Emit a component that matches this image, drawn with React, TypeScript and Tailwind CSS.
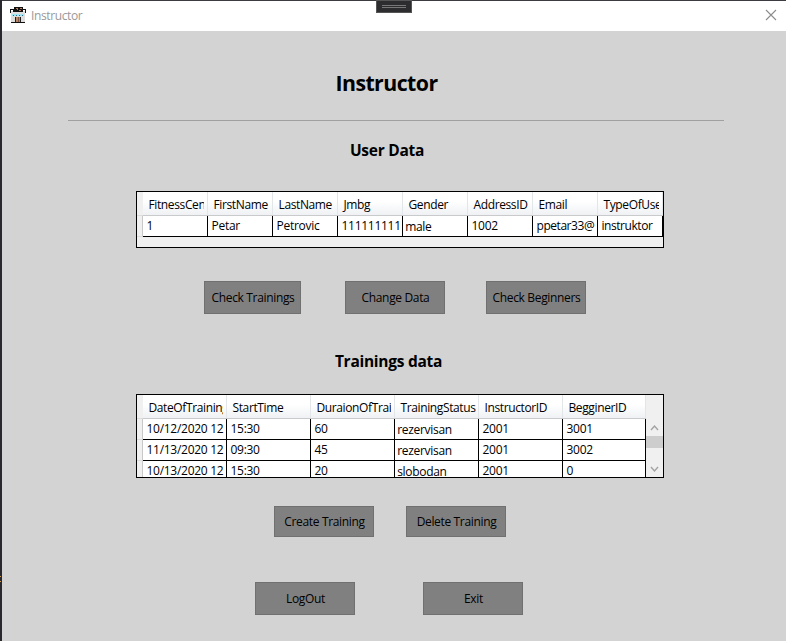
import React from "react";

type Col = { title: string; width: string; clip: string };

const userCols: Col[] = [
  { title: "FitnessCenter", width: "w-[65px]", clip: "w-[59px]" },
  { title: "FirstName", width: "w-[65px]", clip: "w-[62px]" },
  { title: "LastName", width: "w-[65px]", clip: "w-[62px]" },
  { title: "Jmbg", width: "w-[65px]", clip: "w-[59px]" },
  { title: "Gender", width: "w-[65px]", clip: "w-[59px]" },
  { title: "AddressID", width: "w-[65px]", clip: "w-[62px]" },
  { title: "Email", width: "w-[65px]", clip: "w-[59px]" },
  { title: "TypeOfUser", width: "w-[65px]", clip: "w-[59px]" },
];
const userRows = [["1", "Petar", "Petrovic", "111111111", "male", "1002", "ppetar33@", "instruktor"]];

const trainingCols: Col[] = [
  { title: "DateOfTraining", width: "w-[84px]", clip: "w-[78px]" },
  { title: "StartTime", width: "w-[84px]", clip: "w-[78px]" },
  { title: "DuraionOfTraining", width: "w-[84px]", clip: "w-[78px]" },
  { title: "TrainingStatus", width: "w-[84px]", clip: "w-[81px]" },
  { title: "InstructorID", width: "w-[84px]", clip: "w-[78px]" },
  { title: "BegginerID", width: "w-[83px]", clip: "w-[78px]" },
];
const trainingRows = [
  ["10/12/2020 12", "15:30", "60", "rezervisan", "2001", "3001"],
  ["11/13/2020 12", "09:30", "45", "rezervisan", "2001", "3002"],
  ["10/13/2020 12", "15:30", "20", "slobodan", "2001", "0"],
];

const comboValues = ["male", "rezervisan", "slobodan"];

function cellText(value: string) {
  if (comboValues.includes(value)) return "pl-[2.2px] leading-[21px] tracking-[-0.3px]";
  if (/^[a-z]/.test(value)) return "pl-[3.5px] leading-[19px] tracking-[-0.45px]";
  return "pl-[3.5px] leading-[19px] tracking-[-0.28px]";
}

function Grid({ cols, rows }: { cols: Col[]; rows: string[][] }) {
  return (
    <div className="flex">
      <div className="w-[6px] shrink-0">
        <div className="h-[24px] border-b border-[#dcdcdc]" />
        {rows.map((_, i) => (
          <div key={i} className="h-[21px] border-r border-b border-r-[#c8c8c8] border-b-[#dcdcdc]" />
        ))}
      </div>
      <div className="shrink-0">
        <div className="flex h-[24px] border-b border-[#c9cacb] bg-gradient-to-b from-white from-40% to-[#eff1f4]">
          {cols.map((c) => (
            <div key={c.title} className={`${c.width} shrink-0 border-r border-[#e3e6e9] pl-[2px]`}>
              <div className={`${c.clip} h-[23px] overflow-hidden whitespace-nowrap pl-[3.5px] leading-[25px] tracking-[-0.38px]`}>
                {c.title}
              </div>
            </div>
          ))}
        </div>
        {rows.map((r, i) => (
          <div key={i} className="flex h-[21px] border-b border-black bg-white">
            {r.map((v, j) => (
              <div
                key={j}
                className={`${cols[j].width} ${cellText(v)} shrink-0 overflow-hidden whitespace-nowrap border-r border-black`}
              >
                {v}
              </div>
            ))}
          </div>
        ))}
      </div>
    </div>
  );
}

function Button({ label, size }: { label: string; size: string }) {
  return (
    <button
      className={`${size} flex items-center justify-center border border-[#707070] bg-[#808080] pl-px pt-px tracking-[-0.34px]`}
    >
      {label}
    </button>
  );
}

function GymIcon() {
  return (
    <svg width="16" height="16" viewBox="0 0 16 16" shapeRendering="crispEdges">
      <path d="M1 4h14v11h-14z" fill="#dedede" />
      <path d="M0 2h16v1h-16zM0 3h1v3h-1zM15 3h1v3h-1z" fill="#111" />
      <path d="M4 0h9v4h-9zM3 3h10v2h-10z" fill="#111" />
      <path d="M6 1h2v1h-2zM10 1h2v1h-2zM7 2h1v1h-1zM9 3h2v1h-2z" fill="#b77b5b" />
      <path d="M2 7h12v2h-12z" fill="#a5e5f3" />
      <path d="M3 8h1v1h-1zM6 8h1v1h-1zM9 8h1v1h-1zM12 8h1v1h-1z" fill="#24728c" />
      <path d="M5 10h1v5h-1zM10 10h1v5h-1z" fill="#222" />
      <path d="M6 10h4v5h-4z" fill="#b98569" />
      <path d="M8 10h1v5h-1z" fill="#7d5644" />
      <path d="M1 15h14v1h-14z" fill="#111" />
    </svg>
  );
}

export default function App() {
  return (
    <div className="flex h-[641px] w-[786px] overflow-hidden bg-[#d3d3d3] font-['Open_Sans','Noto_Sans',sans-serif] text-[12px] tracking-[-0.2px] text-black">
      <div className="w-[2px] shrink-0 bg-[#29292d] pt-[576px]">
        <div className="h-px w-px bg-[#d69d45]" />
        <div className="mt-[4px] h-px w-px bg-[#d69d45]" />
      </div>
      <div className="flex w-[784px] shrink-0 flex-col">
        <header className="relative flex h-[31px] shrink-0 items-center border-t border-[#3c3c40] bg-white pl-[8px] pr-[9px]">
          <div className="-mt-[2px]">
            <GymIcon />
          </div>
          <span className="ml-[5px] tracking-[-0.38px] text-[#999]">Instructor</span>
          <svg className="-mt-[2px] ml-auto" width="12" height="12" viewBox="0 0 12 12">
            <path d="M1 1L11 11M11 1L1 11" stroke="#8c8c8c" strokeWidth="1.1" />
          </svg>
          <div className="absolute left-[374px] top-[-1px] flex h-[13px] w-[36px] flex-col items-center gap-px border border-[#555] bg-[#2d2d30] pt-[4px]">
            <div className="h-px w-[24px] bg-[#777]" />
            <div className="h-px w-[24px] bg-[#777]" />
          </div>
        </header>

        <h1 className="mt-[36px] h-[32px] pr-[15px] text-center text-[21.3px] font-bold leading-[32px] tracking-[-0.55px]">Instructor</h1>
        <div className="ml-[66px] mt-[21px] h-px w-[656px] bg-[#a0a0a0]" />
        <h2 className="mt-[17px] h-[24px] pr-[14px] text-center text-[15.5px] font-bold leading-[24px] tracking-[-0.27px]">User Data</h2>

        <section className="ml-[134px] mt-[29px] h-[57px] w-[528px] shrink-0 overflow-hidden border border-black bg-[#f0f0f0]">
          <Grid cols={userCols} rows={userRows} />
        </section>

        <div className="ml-[202px] mt-[33px] flex">
          <Button label="Check Trainings" size="h-[33px] w-[97px]" />
          <div className="w-[44px]" />
          <Button label="Change Data" size="h-[33px] w-[100px]" />
          <div className="w-[41px]" />
          <Button label="Check Beginners" size="h-[33px] w-[100px]" />
        </div>

        <h2 className="mt-[35px] h-[24px] pr-[11px] text-center text-[15.5px] font-bold leading-[24px] tracking-[-0.27px]">Trainings data</h2>

        <section className="ml-[134px] mt-[21px] flex h-[84px] w-[528px] shrink-0 overflow-hidden border border-black bg-[#f0f0f0]">
          <Grid cols={trainingCols} rows={trainingRows} />
          <div className="flex w-[17px] shrink-0 flex-col items-center pt-[24px]">
            <svg width="17" height="17" viewBox="0 0 17 17">
              <path d="M5 11L8.500 7L12 11" fill="none" stroke="#a3a3a3" strokeWidth="1.4" />
            </svg>
            <div className="h-[12px] w-[17px] bg-[#cdcdcd]" />
            <svg className="mt-[12px]" width="17" height="17" viewBox="0 0 17 17">
              <path d="M5 7L8.500 11L12 7" fill="none" stroke="#a3a3a3" strokeWidth="1.4" />
            </svg>
          </div>
        </section>

        <div className="ml-[272px] mt-[28px] flex gap-[32px]">
          <Button label="Create Training" size="h-[31px] w-[100px]" />
          <Button label="Delete Training" size="h-[31px] w-[100px]" />
        </div>
        <div className="ml-[253px] mt-[45px] flex gap-[68px]">
          <Button label="LogOut" size="h-[33px] w-[100px]" />
          <Button label="Exit" size="h-[33px] w-[100px]" />
        </div>
      </div>
    </div>
  );
}
